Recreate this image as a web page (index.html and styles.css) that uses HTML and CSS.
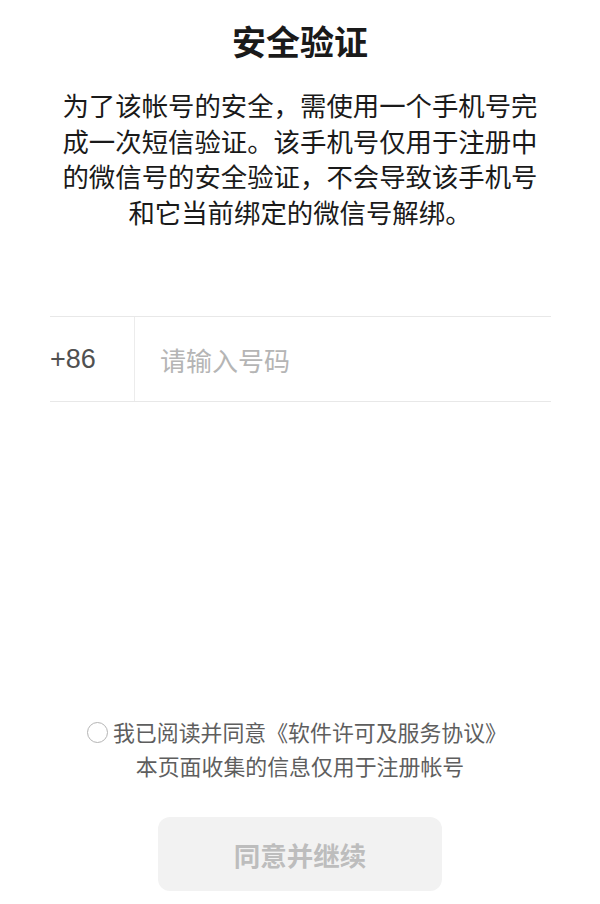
FILE: index.html
```html
<!DOCTYPE html>
<html lang="zh-CN">
<head>
    <meta charset="UTF-8">
    <title>安全验证</title>
    <link rel="stylesheet" href="styles.css">
</head>
<body>

    <!-- Heading and explanation -->
    <h1 class="title">安全验证</h1>
    <p class="desc">为了该帐号的安全，需使用一个手机号完成一次短信验证。该手机号仅用于注册中的微信号的安全验证，不会导致该手机号和它当前绑定的微信号解绑。</p>

    <!-- Phone number row -->
    <div class="phone-row">
        <div class="prefix">+86</div>
        <input class="phone-input" type="tel" placeholder="请输入号码">
    </div>

    <!-- Agreement and submit -->
    <div class="agree">
        <div class="agree-line">
            <span class="check"></span>
            <span>我已阅读并同意《软件许可及服务协议》</span>
        </div>
        <div class="agree-note">本页面收集的信息仅用于注册帐号</div>
    </div>

    <button class="btn" disabled>同意并继续</button>

</body>
</html>
```

FILE: styles.css
```css
/* === Global === */
body {
    margin: 0;
    background: #ffffff;
    font-family: "Noto Sans CJK SC", "Noto Sans", sans-serif;
    color: #1a1a1a;
}

/* === Heading === */
.title {
    margin: 0;
    padding-top: 17px;
    font-size: 34px;
    line-height: 48px;
    font-weight: 700;
    text-align: center;
}

.desc {
    width: 480px;
    margin: 22px auto 0;
    font-size: 26.4px;
    line-height: 35.5px;
    text-align: center;
}

/* === Phone row === */
.phone-row {
    display: flex;
    height: 84px;
    margin: 87px 49px 0 50px;
    border-top: 1px solid #e8e8e8;
    border-bottom: 1px solid #e8e8e8;
}

.prefix {
    width: 84px;
    border-right: 1px solid #ececec;
    display: flex;
    align-items: center;
    font-family: "Liberation Sans", Arial, sans-serif;
    font-size: 27px;
    color: #505050;
}

.phone-input {
    flex: 1;
    border: none;
    outline: none;
    padding: 0 0 0 25px;
    font-family: "Noto Sans CJK SC", sans-serif;
    font-size: 26px;
    color: #1a1a1a;
    background: transparent;
}

.phone-input::placeholder {
    color: #b5b5b5;
}

/* === Agreement === */
.agree {
    margin-top: 313px;
    font-size: 21.9px;
    line-height: 34px;
    color: #5e5e5e;
    text-align: center;
}

.agree-line {
    display: flex;
    justify-content: center;
    align-items: center;
    gap: 5px;
    margin-left: -6px;
}

.check {
    width: 19px;
    height: 19px;
    border: 1px solid #b4b4b4;
    border-radius: 50%;
}

/* === Submit button === */
.btn {
    display: block;
    width: 284px;
    height: 74px;
    margin: 34px auto 0;
    border: none;
    border-radius: 12px;
    background: #f2f2f2;
    color: #bdbdbd;
    font-family: "Noto Sans CJK SC", sans-serif;
    font-size: 26.5px;
    font-weight: 600;
}
```
